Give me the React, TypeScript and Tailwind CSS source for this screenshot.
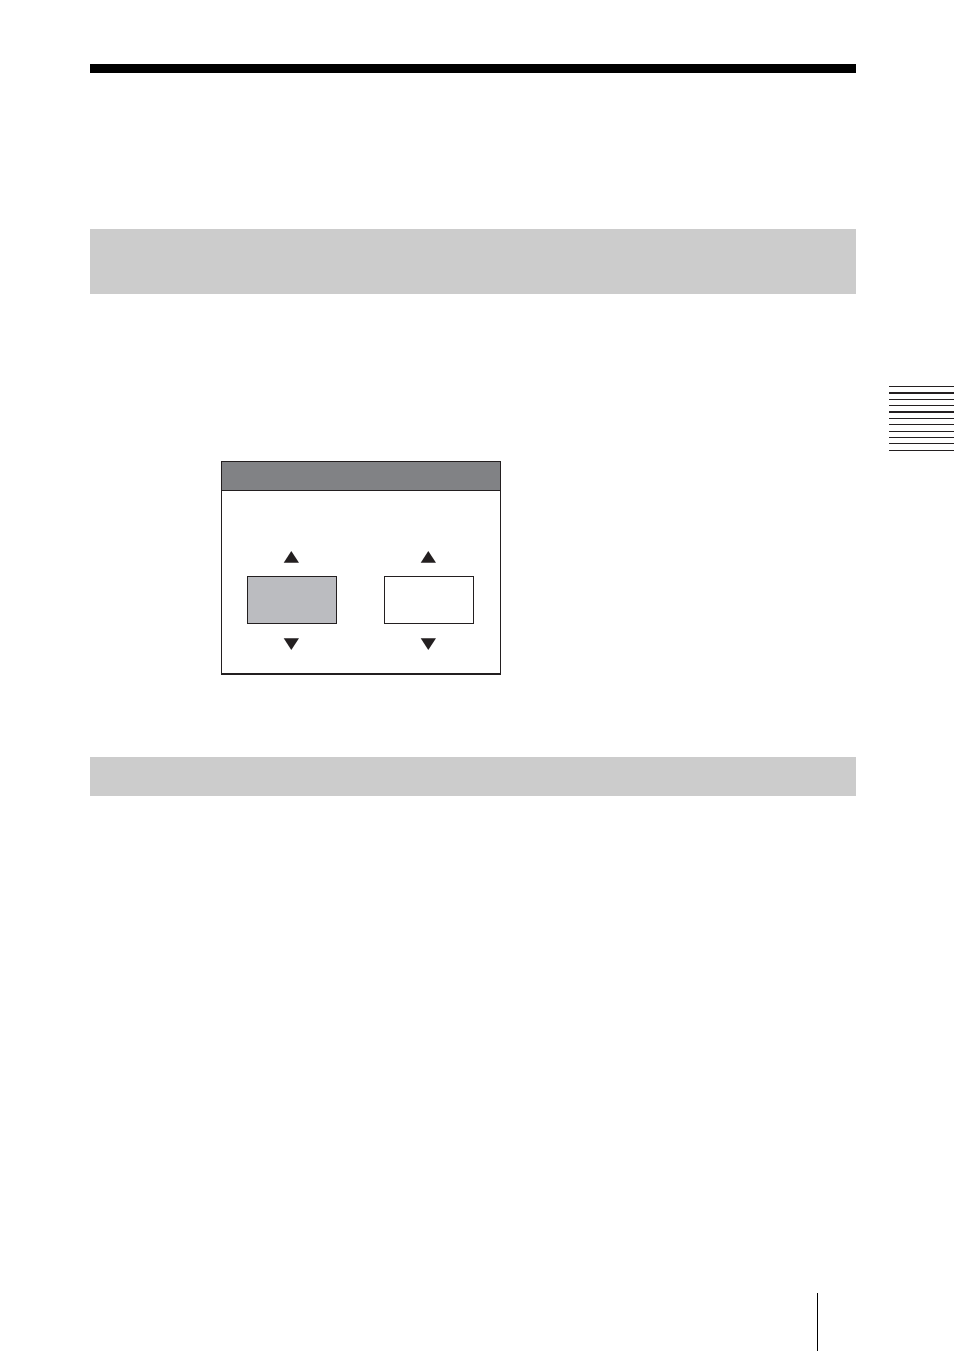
import React, { useState } from "react";

type SpinnerProps = { label: string; active?: boolean };

function Spinner({ label, active = false }: SpinnerProps) {
  const [value, setValue] = useState("");
  const step = (delta: number) => setValue(String((Number(value) || 0) + delta));

  return (
    <div className="flex w-[90px] flex-col items-center gap-[13px]">
      <button type="button" aria-label={`Increase ${label}`} onClick={() => step(1)}>
        <svg className="block h-3 w-[18px]" viewBox="0 0 18 12" fill="#231f20" aria-hidden="true">
          <path d="M8.3 0 L16 11.7 H0.7 Z" />
        </svg>
      </button>
      <input
        type="text"
        aria-label={label}
        value={value}
        onChange={(event) => setValue(event.target.value)}
        className={
          active
            ? "h-12 w-full border border-[#231f20] bg-[#bbbcc0] text-center"
            : "h-12 w-full border border-[#231f20] bg-white text-center"
        }
      />
      <button type="button" aria-label={`Decrease ${label}`} onClick={() => step(-1)}>
        <svg className="block h-[13px] w-[18px]" viewBox="0 0 18 13" fill="#231f20" aria-hidden="true">
          <path d="M0.7 1.3 H16 L8.3 13 Z" />
        </svg>
      </button>
    </div>
  );
}

function SideTab() {
  return (
    <svg
      className="mt-[386px] h-[65px] w-[65px]"
      viewBox="0 0 65 65"
      fill="#231f20"
      shapeRendering="crispEdges"
      aria-hidden="true"
    >
      <path d="M0 0h65v1H0z M0 6h65v2H0z M0 13h65v1H0z M0 19h65v1H0z M0 25h65v2H0z M0 32h65v1H0z M0 38h65v1H0z M0 45h65v1H0z M0 51h65v1H0z M0 57h65v1H0z M0 64h65v1H0z" />
    </svg>
  );
}

export default function App() {
  return (
    <div className="flex min-h-screen bg-white font-['Liberation_Sans',sans-serif] text-[#231f20]">
      <main className="flex flex-1 flex-col pt-16 pl-[90px]">
        <div className="h-[9px] bg-black" />
        <div className="mt-[156px] h-[65px] bg-[#cccccc]" />
        <section className="mt-[167px] ml-[131px] w-[280px] border border-b-2 border-[#231f20]">
          <header className="h-[29px] border-b border-[#231f20] bg-[#818285]" />
          <div className="flex gap-[47px] px-[25px] pt-[60px] pb-[23px]">
            <Spinner label="First value" active />
            <Spinner label="Second value" />
          </div>
        </section>
        <div className="mt-[82px] h-[39px] bg-[#cccccc]" />
        <footer className="mt-auto mr-[38px] flex h-[58px] justify-end">
          <div className="w-px bg-black" />
        </footer>
      </main>
      <aside className="flex w-[98px] items-start justify-end">
        <SideTab />
      </aside>
    </div>
  );
}
